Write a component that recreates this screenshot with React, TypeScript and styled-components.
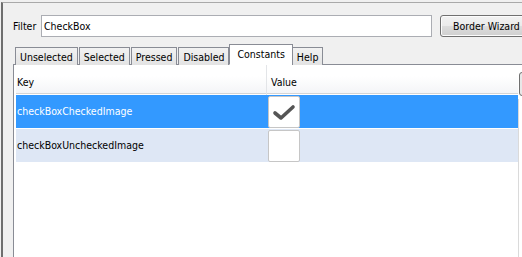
import styled, { createGlobalStyle } from "styled-components";

const GlobalStyle = createGlobalStyle`
  html, body {
    margin: 0;
    padding: 0;
    background: #f0f0f0;
  }
  body {
    font-family: "DejaVu Sans Condensed", "DejaVu Sans", sans-serif;
    font-size: 10.5px;
    color: #000000;
  }
`;

const Screen = styled.div`
  width: 522px;
  height: 257px;
  overflow: hidden;
  background: #f0f0f0;
  padding: 2px 0 0 1px;
  box-sizing: border-box;
`;

const Window = styled.div`
  height: 100%;
  border-top: 1px solid #a9a9a9;
  border-left: 2px solid #6e6e6e;
  box-sizing: border-box;
  padding: 12px 0 0 10px;
  display: flex;
  flex-direction: column;
`;

const FilterRow = styled.div`
  display: flex;
  align-items: center;
  height: 22px;
  white-space: nowrap;
`;

const FilterLabel = styled.span`
  flex: none;
  width: 28px;
`;

const TextField = styled.div`
  flex: none;
  width: 391px;
  height: 22px;
  box-sizing: border-box;
  border: 1px solid #abadb3;
  background: #ffffff;
  padding: 0 0 0 2px;
  line-height: 20px;
`;

const Button = styled.div`
  margin-left: 8px;
  flex: none;
  width: 96px;
  height: 22px;
  box-sizing: border-box;
  border: 1px solid #707070;
  border-radius: 3px;
  background: linear-gradient(#f2f2f2 0%, #ebebeb 50%, #dddddd 51%, #cfcfcf 100%);
  padding-left: 12px;
  line-height: 20px;
  box-shadow: inset 0 0 0 1px #fcfcfc;
`;

const TabStrip = styled.div`
  display: flex;
  align-items: flex-end;
  margin-top: 7px;
  padding-left: 2px;
  height: 21px;
  position: relative;
  z-index: 1;
`;

const Tab = styled.div<{ $active?: boolean }>`
  box-sizing: border-box;
  height: ${(p) => (p.$active ? "21px" : "18px")};
  margin: ${(p) => (p.$active ? "0 -1px 0 -1px" : "0 1px 0 0")};
  padding: ${(p) => (p.$active ? "2px 7px 0" : "2px 4px 0")};
  border: 1px solid #898c95;
  border-bottom: ${(p) => (p.$active ? "1px solid #ffffff" : "none")};
  background: ${(p) =>
    p.$active ? "#ffffff" : "linear-gradient(#f2f2f2, #e3e3e3)"};
  line-height: 14px;
  white-space: nowrap;
`;

const Panel = styled.div`
  flex: 1;
  margin-top: -1px;
  border: 1px solid #898c95;
  border-right: none;
  border-bottom: none;
  background: #ffffff;
  padding: 0 0 0 2px;
  display: flex;
`;

const Table = styled.div`
  width: 502px;
  display: flex;
  flex-direction: column;
`;

const HeaderRow = styled.div`
  display: grid;
  grid-template-columns: 250px 1fr;
  height: 28px;
  background: linear-gradient(#ffffff 0%, #ffffff 40%, #f4f5f7 100%);
  border-bottom: 1px solid #d5d5d5;
  margin-bottom: 1px;
`;

const HeaderCell = styled.div<{ $divider?: boolean }>`
  padding-left: ${(p) => (p.$divider ? "4px" : "1px")};
  border-left: ${(p) => (p.$divider ? "1px solid #e3e5e8" : "none")};
  line-height: 35px;
`;

const Row = styled.div<{ $selected?: boolean }>`
  display: grid;
  grid-template-columns: 251px 1fr;
  height: 33px;
  margin-bottom: 1px;
  background: ${(p) => (p.$selected ? "#3399ff" : "#dee7f5")};
  color: ${(p) => (p.$selected ? "#ffffff" : "#000000")};
`;

const KeyCell = styled.div`
  padding-left: 1px;
  line-height: 33px;
  white-space: nowrap;
`;

const ValueCell = styled.div`
  padding: 1px 0 0 1px;
`;

const Swatch = styled.div`
  width: 32px;
  height: 32px;
  box-sizing: border-box;
  background: #ffffff;
  border: 1px solid #c6c6c6;
  border-radius: 2px;
  display: flex;
  align-items: center;
  justify-content: center;
`;

const ScrollEdge = styled.div`
  flex: 1;
  border-left: 1px solid #dadada;
  margin-top: 34px;
  position: relative;
`;

const CornerButton = styled.div`
  position: absolute;
  top: -27px;
  left: 0;
  width: 6px;
  height: 22px;
  border: 1px solid #707070;
  border-radius: 3px 0 0 3px;
  background: #e8e8e8;
`;

const CheckMark = () => (
  <svg width="24" height="18" viewBox="0 0 24 18">
    <path
      d="M3 10 L9 15 L21 4"
      fill="none"
      stroke="#555555"
      strokeWidth="3.6"
      strokeLinecap="round"
      strokeLinejoin="round"
    />
  </svg>
);

const tabs = ["Unselected", "Selected", "Pressed", "Disabled", "Constants", "Help"];

const rows = [
  { key: "checkBoxCheckedImage", checked: true },
  { key: "checkBoxUncheckedImage", checked: false },
];

const App = () => {
  return (
    <Screen>
      <GlobalStyle />
      <Window>
        <FilterRow>
          <FilterLabel>Filter</FilterLabel>
          <TextField>CheckBox</TextField>
          <Button>Border Wizard</Button>
        </FilterRow>
        <TabStrip>
          {tabs.map((t) => (
            <Tab key={t} $active={t === "Constants"}>
              {t}
            </Tab>
          ))}
        </TabStrip>
        <Panel>
          <Table>
            <HeaderRow>
              <HeaderCell>Key</HeaderCell>
              <HeaderCell $divider>Value</HeaderCell>
            </HeaderRow>
            {rows.map((r, i) => (
              <Row key={r.key} $selected={i === 0}>
                <KeyCell>{r.key}</KeyCell>
                <ValueCell>
                  <Swatch>{r.checked && <CheckMark />}</Swatch>
                </ValueCell>
              </Row>
            ))}
          </Table>
          <ScrollEdge>
            <CornerButton />
          </ScrollEdge>
        </Panel>
      </Window>
    </Screen>
  );
};

export default App;
